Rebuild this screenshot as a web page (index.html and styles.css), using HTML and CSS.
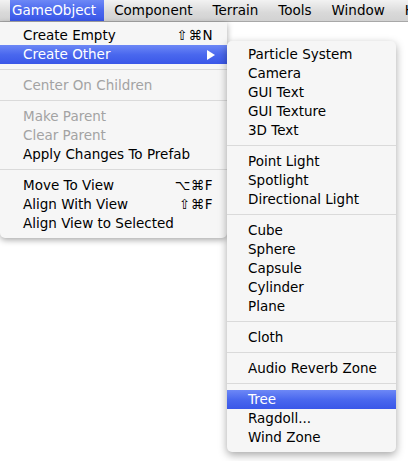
FILE: index.html
```html
<!DOCTYPE html>
<html>
<head>
<meta charset="utf-8">
<link rel="stylesheet" href="styles.css">
</head>
<body>
<div class="menubar">
  <div class="mb-item active">GameObject</div>
  <div class="mb-item">Component</div>
  <div class="mb-item">Terrain</div>
  <div class="mb-item">Tools</div>
  <div class="mb-item">Window</div>
  <div class="mb-item">Help</div>
</div>
<div class="menus">
  <div class="menu main">
    <div class="item"><span>Create Empty</span><span class="key">⇧⌘N</span></div>
    <div class="item sel"><span>Create Other</span><span class="arrow"></span></div>
    <div class="sep"></div>
    <div class="item dis"><span>Center On Children</span></div>
    <div class="sep"></div>
    <div class="item dis"><span>Make Parent</span></div>
    <div class="item dis"><span>Clear Parent</span></div>
    <div class="item"><span>Apply Changes To Prefab</span></div>
    <div class="sep"></div>
    <div class="item"><span>Move To View</span><span class="key">⌥⌘F</span></div>
    <div class="item"><span>Align With View</span><span class="key">⇧⌘F</span></div>
    <div class="item"><span>Align View to Selected</span></div>
  </div>
  <div class="menu sub">
    <div class="item"><span>Particle System</span></div>
    <div class="item"><span>Camera</span></div>
    <div class="item"><span>GUI Text</span></div>
    <div class="item"><span>GUI Texture</span></div>
    <div class="item"><span>3D Text</span></div>
    <div class="sep"></div>
    <div class="item"><span>Point Light</span></div>
    <div class="item"><span>Spotlight</span></div>
    <div class="item"><span>Directional Light</span></div>
    <div class="sep"></div>
    <div class="item"><span>Cube</span></div>
    <div class="item"><span>Sphere</span></div>
    <div class="item"><span>Capsule</span></div>
    <div class="item"><span>Cylinder</span></div>
    <div class="item"><span>Plane</span></div>
    <div class="sep"></div>
    <div class="item"><span>Cloth</span></div>
    <div class="sep"></div>
    <div class="item"><span>Audio Reverb Zone</span></div>
    <div class="sep"></div>
    <div class="item sel"><span>Tree</span></div>
    <div class="item"><span>Ragdoll...</span></div>
    <div class="item"><span>Wind Zone</span></div>
  </div>
</div>
</body>
</html>
```
FILE: styles.css
```css
html, body {
  margin: 0;
  padding: 0;
  background: #ffffff;
  overflow: hidden;
}
body {
  width: 408px;
  height: 461px;
  font-family: "DejaVu Sans", "Liberation Sans", sans-serif;
  font-size: 13.5px;
  color: #000;
}
.menubar {
  display: flex;
  height: 21px;
  border-bottom: 1px solid #a8a8a8;
  background: linear-gradient(#f2f2f2, #d9d9d9 60%, #d2d2d2);
  padding-left: 10px;
  white-space: nowrap;
}
.mb-item {
  display: flex;
  align-items: center;
  padding: 0 9px 0 1px;
  margin-right: 10px;
  height: 21px;
  line-height: 21px;
}
.mb-item.active {
  padding: 0 8px 0 2px;
  margin-right: 9px;
  background: linear-gradient(#6d88f6, #4a68ee 50%, #3a57e8);
  color: #fff;
}
.menus {
  display: flex;
  align-items: flex-start;
}
.menu {
  background: #f6f6f6;
  padding: 4px 0 5px;
  box-sizing: border-box;
}
.main {
  width: 227px;
  border-radius: 0 0 5px 5px;
  box-shadow: 0 2px 6px rgba(0,0,0,0.35);
  position: relative;
  z-index: 1;
}
.sub {
  width: 169px;
  margin-top: 19px;
  border-radius: 5px;
  box-shadow: 0 3px 8px rgba(0,0,0,0.35);
  position: relative;
  z-index: 2;
}
.item {
  height: 19px;
  line-height: 19px;
  display: flex;
  justify-content: space-between;
  align-items: center;
  padding: 0 14px 0 23px;
  white-space: nowrap;
}
.sub .item {
  padding-left: 21px;
}
.item.dis {
  color: #a3a3a3;
}
.item.sel {
  background: linear-gradient(#6d88f6, #4a68ee 50%, #3a57e8);
  color: #fff;
}
.key {
  letter-spacing: 0.5px;
}
.arrow {
  width: 0;
  height: 0;
  border-top: 5px solid transparent;
  border-bottom: 5px solid transparent;
  border-left: 8px solid #fff;
  margin-right: -2px;
}
.sep {
  height: 12px;
  position: relative;
}
.sep::after {
  content: "";
  position: absolute;
  left: 0;
  right: 0;
  top: 5px;
  height: 1px;
  background: #dadada;
}
```
